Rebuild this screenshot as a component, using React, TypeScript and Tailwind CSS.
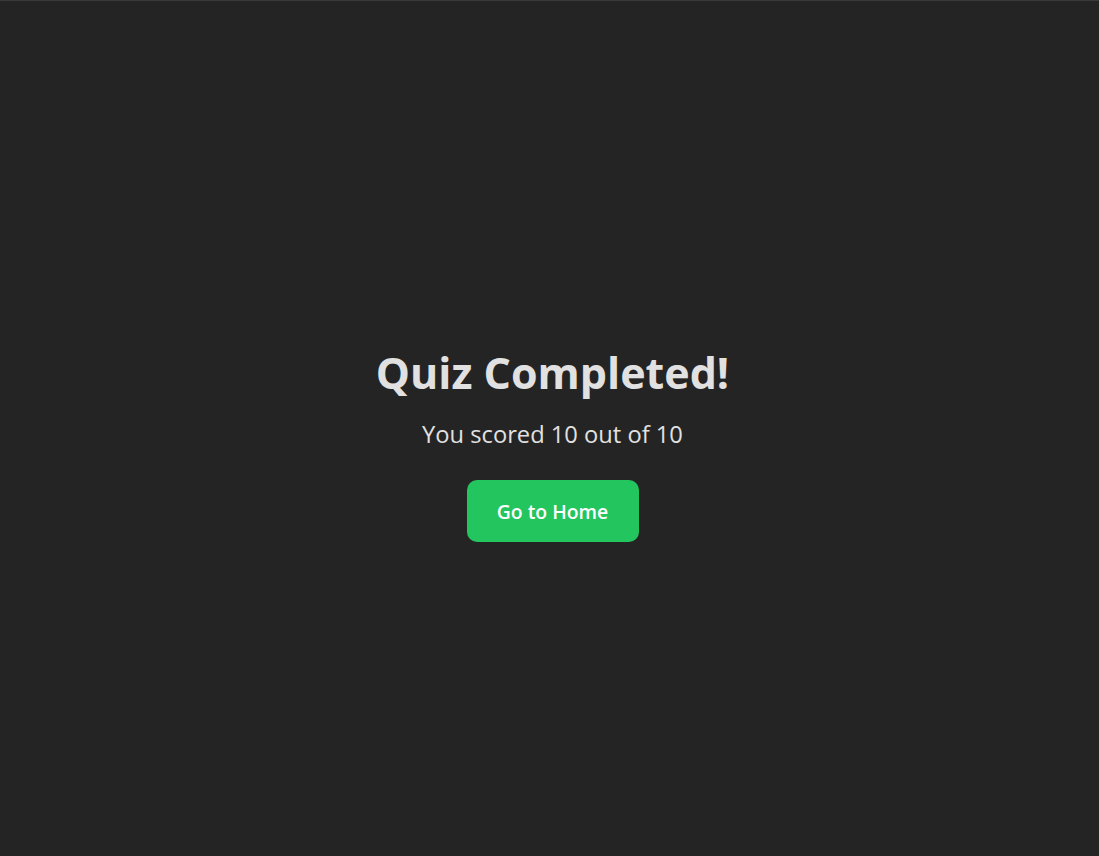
import React from "react";

const App = () => {
  return (
    <div
      className="h-[856px] w-full bg-[#242424] border-t border-[#3a3a3a] flex flex-col items-center pt-[348px] pl-[6px]"
      style={{ fontFamily: '"Open Sans", "Noto Sans", sans-serif' }}
    >
      <h1 className="text-[43px] leading-[48px] font-bold text-[#e1e1e1]">Quiz Completed!</h1>
      <p className="mt-[21px] text-[23.7px] leading-[32px] text-[#e1e1e1]">You scored 10 out of 10</p>
      <button className="mt-[30px] w-[172px] h-[62px] rounded-[10px] bg-[#22c55e] text-white text-[19.4px] font-semibold pt-[1px]">
        Go to Home
      </button>
    </div>
  );
};

export default App;
